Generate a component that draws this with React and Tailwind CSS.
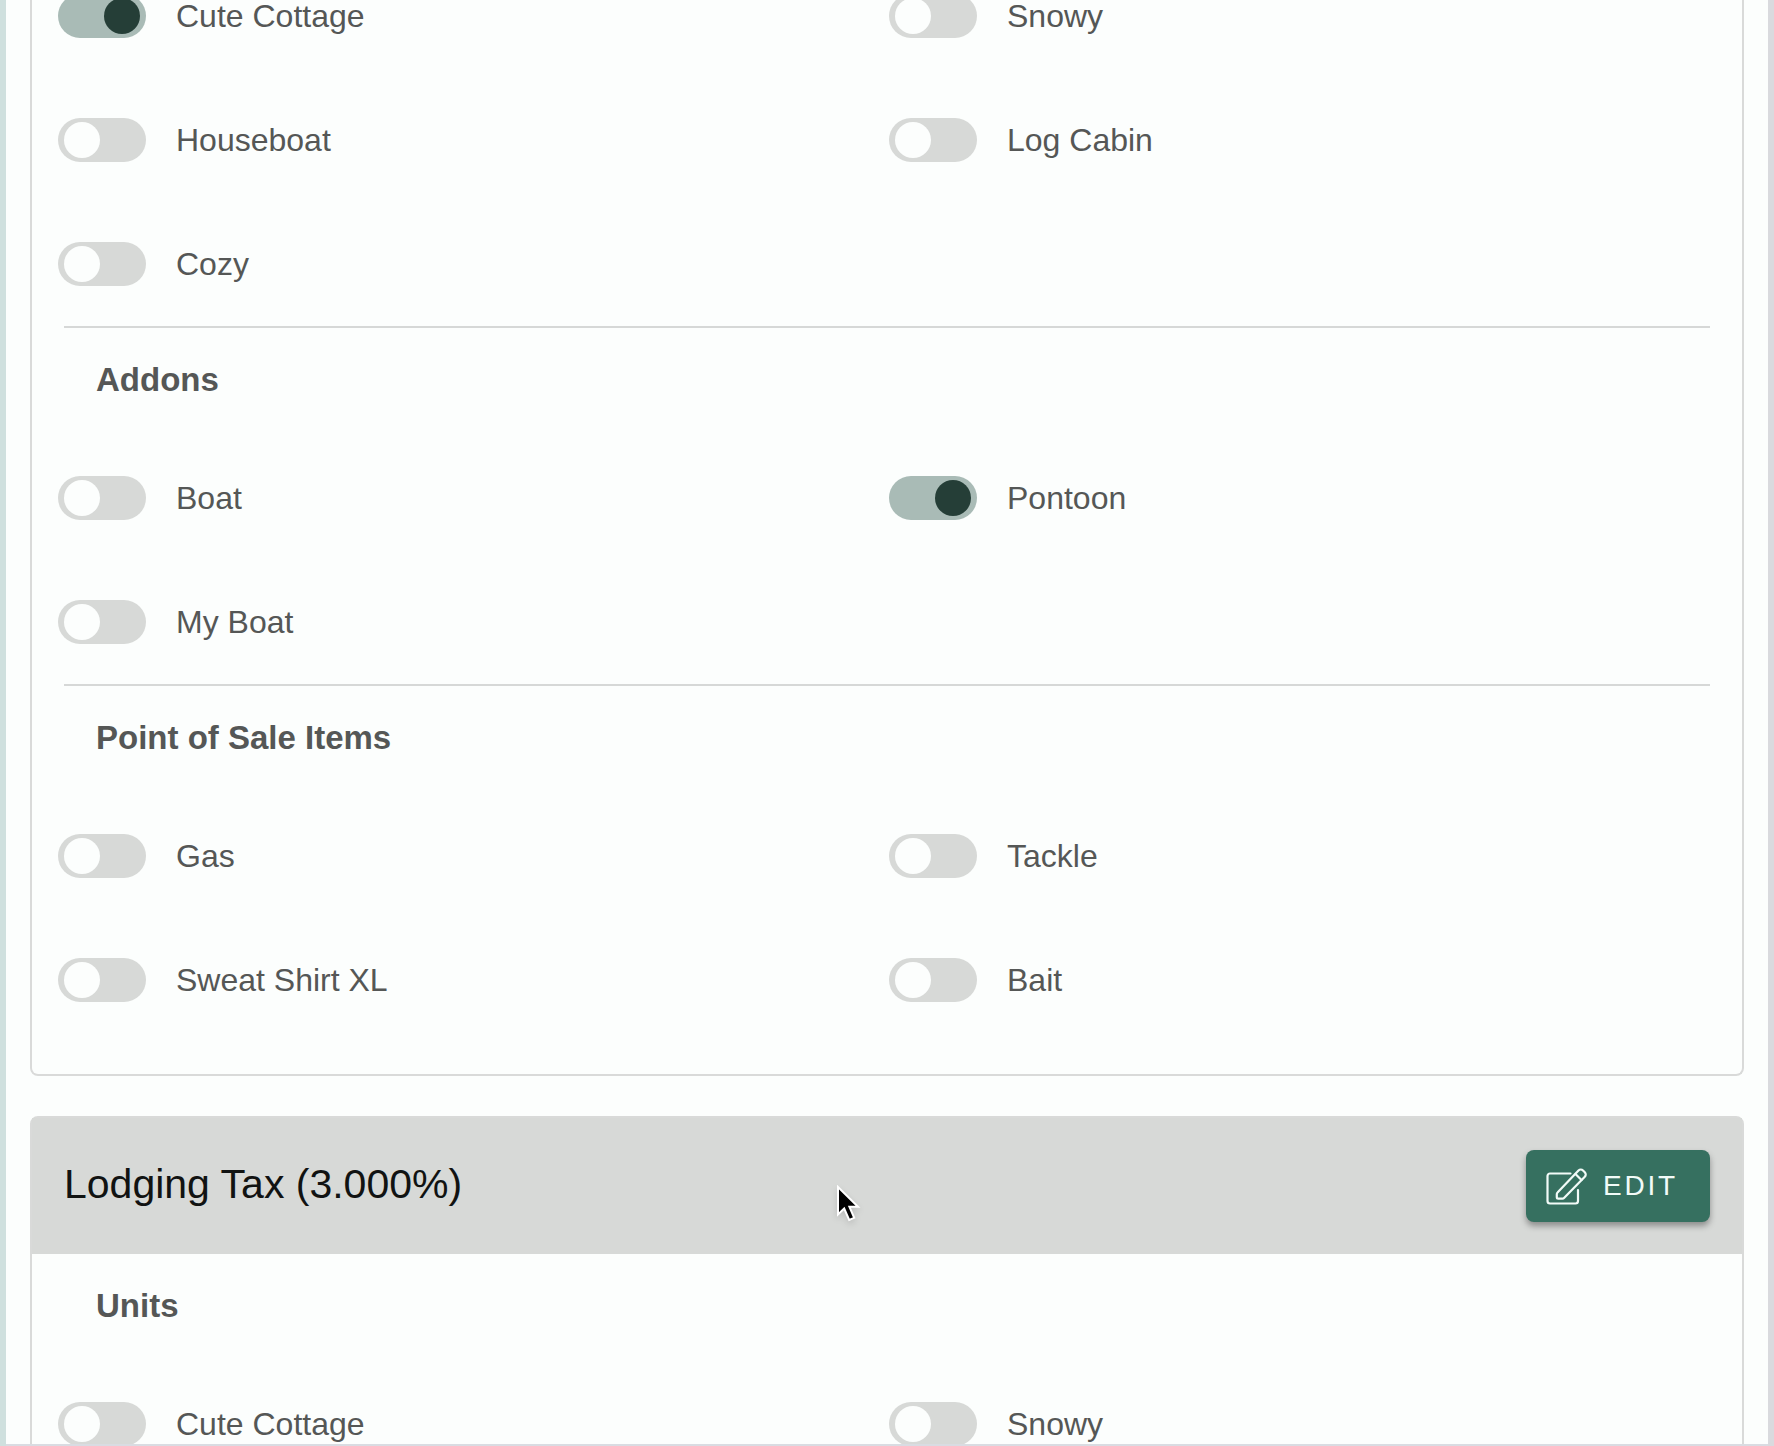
import { useId, useState } from "react";

const lodgingUnits = ["Cute Cottage", "Snowy", "Houseboat", "Log Cabin", "Cozy"];
const addons = ["Boat", "Pontoon", "My Boat"];
const saleItems = ["Gas", "Tackle", "Sweat Shirt XL", "Bait"];

const EditIcon = () => (
    <svg viewBox="0 0 41 38" className="w-[41px] h-[38px]" fill="none" stroke="currentColor"
        strokeWidth="2.2" strokeLinejoin="round" strokeLinecap="round" aria-hidden="true">
        <path d="M24.500 6.500H4A2.500 2.500 0 0 0 1.500 9v25A2.500 2.500 0 0 0 4 36.500h25.500a2.500 2.500 0 0 0 2.500-2.500V23" />
        <path d="M11.500 25.500 32.500 3.500a3.200 3.200 0 0 1 4.500 0l1.800 1.800a3.200 3.200 0 0 1 0 4.500L18 31q-.6.6-1.500.6h-4.300q-1.400 0-1.400-1.400v-3q0-1 .7-1.700z" />
        <path d="m29.500 7 6 6" />
    </svg>
);

const Cursor = () => (
    <svg viewBox="0 0 26 40" className="absolute left-1/2 top-[67px] -ml-[51px] w-[26px] h-[40px] drop-shadow-md" aria-hidden="true">
        <path d="M2 2v27.500l6.200-6 5 11.500 5-2.200-4.800-11H22z" fill="#000" stroke="#fff" strokeWidth="2" />
    </svg>
);

const Toggle = ({ label, on = false }) => {
    const id = useId();
    const [checked, setChecked] = useState(on);

    return (
        <div className="flex items-center h-[124px] pl-0.5">
            <input id={id} type="checkbox" role="switch" checked={checked}
                onChange={(e) => setChecked(e.target.checked)}
                className="appearance-none shrink-0 w-[88px] h-11 rounded-full bg-[#d7d9d7] cursor-pointer
                    checked:bg-[#a9bbb6] before:block before:size-9 before:mt-1 before:ml-1.5 before:rounded-full
                    before:bg-[#fcfefd] checked:before:ml-[46px] checked:before:bg-[#253e37]" />
            <label htmlFor={id} className="pl-[30px] text-[32px] leading-[48px] text-[#555756] cursor-pointer">{label}</label>
        </div>
    );
};

const ToggleGrid = ({ items, active = [] }) => (
    <div className="grid grid-cols-2 px-6">
        {items.map(name => <Toggle key={name} label={name} on={active.includes(name)} />)}
    </div>
);

const Heading = ({ children }) => (
    <h3 className="flex items-center h-[104px] mb-1 px-16 text-[33px] leading-[48px] font-bold text-[#555756]">
        {children}
    </h3>
);

const Divider = () => <hr className="mx-8 border-t-2 border-[#d6d8d7]" />;

const App = () => (
    <div className="h-screen overflow-hidden bg-[#fcfefd] border-l-6 border-l-[#cfe0de] border-r-6 border-r-[#d9dade]"
        style={{ fontFamily: "'Liberation Sans', Arial, sans-serif" }}>
        <div className="h-full overflow-hidden border-b-2 border-[#d9dce2] px-6">
            {/* Scrolled list of taxes */}
            <main className="-mt-[46px] flex flex-col gap-10">
                <section className="border-2 border-t-0 border-[#d9dad9] rounded-b-lg pb-8">
                    <ToggleGrid items={lodgingUnits} active={["Cute Cottage"]} />
                    <Divider />
                    <Heading>Addons</Heading>
                    <ToggleGrid items={addons} active={["Pontoon"]} />
                    <Divider />
                    <Heading>Point of Sale Items</Heading>
                    <ToggleGrid items={saleItems} />
                </section>

                <section className="border-2 border-[#d9dad9] rounded-lg">
                    <header className="relative flex items-center justify-between h-[136px] px-8 bg-[#d7d9d7]">
                        <h2 className="pb-1 text-[41px] leading-[64px] text-[#111312]">Lodging Tax (3.000%)</h2>
                        <button type="button"
                            className="flex items-center gap-4 h-[72px] pl-5 pr-8 rounded-lg bg-[#367060] text-[#f2fbf8] text-[28px] tracking-widest shadow-[0_4px_6px_rgba(0,0,0,0.35)]">
                            <EditIcon />
                            EDIT
                        </button>
                        <Cursor />
                    </header>
                    <Heading>Units</Heading>
                    <ToggleGrid items={lodgingUnits} />
                </section>
            </main>
        </div>
    </div>
);

export default App;
